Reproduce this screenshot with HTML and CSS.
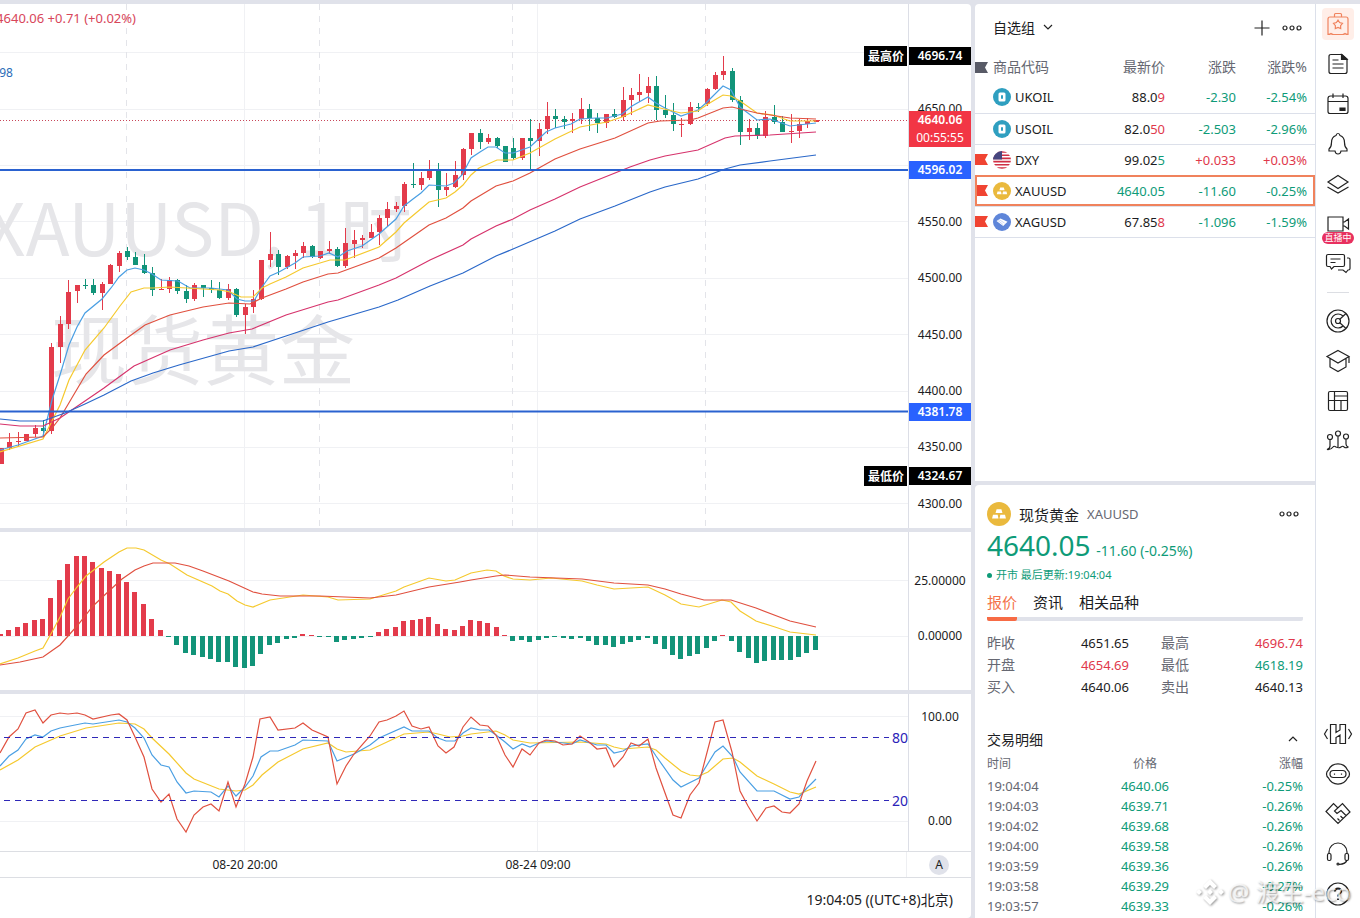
FILE: index.html
```
<!DOCTYPE html>
<html lang="zh-CN">
<head>
    <meta charset="UTF-8">
    <meta name="viewport" content="width=device-width, initial-scale=1.0">
    <title>XAUUSD 现货黄金</title>
    <link rel="stylesheet" href="styles.css">
</head>
<body>
    <div class="app">
        <main class="charts">
            <section class="pane pane-main">
                <svg class="plot" id="pricePlot">
                    <g id="priceGrid"></g>
                    <text class="mark mark-symbol" x="198" y="252">XAUUSD, 1时</text>
                    <text class="mark" x="203" y="375">现货黄金</text>
                    <g id="priceData"></g>
                    <text class="legend red-text" x="136" y="19">4640.06 +0.71 (+0.02%)</text>
                    <text class="legend small blue-text" x="13" y="73">4598</text>
                    <svg class="edge" x="100%">
                        <rect class="tag-black" x="-44" y="42" width="43" height="20" />
                        <text class="tag-text" x="-22" y="57">最高价</text>
                        <rect class="tag-black" x="-44" y="462" width="43" height="20" />
                        <text class="tag-text" x="-22" y="477">最低价</text>
                    </svg>
                </svg>
                <svg class="axis" id="priceAxis"></svg>
            </section>

            <section class="pane pane-sub">
                <svg class="plot" id="macdPlot"></svg>
                <svg class="axis">
                    <text class="tick" x="31" y="53">25.00000</text>
                    <text class="tick" x="31" y="108">0.00000</text>
                </svg>
            </section>

            <section class="pane pane-sub">
                <svg class="plot" id="kdjPlot">
                    <g id="kdjData"></g>
                    <svg class="edge" x="100%">
                        <text class="level" x="-16" y="49">80</text>
                        <text class="level" x="-16" y="112">20</text>
                    </svg>
                </svg>
                <svg class="axis">
                    <text class="tick" x="31" y="27">100.00</text>
                    <text class="tick" x="31" y="131">0.00</text>
                </svg>
            </section>

            <div class="time-axis">
                <svg class="plot">
                    <text class="tick" x="245" y="17">08-20 20:00</text>
                    <text class="tick" x="538" y="17">08-24 09:00</text>
                </svg>
                <div class="time-corner"><button class="auto-btn" type="button">A</button></div>
            </div>
            <footer class="chart-footer">
                <button class="clock" type="button">19:04:05 ((UTC+8)北京)</button>
            </footer>
        </main>

        <aside class="side">
            <section class="watchlist">
                <header class="watch-head">
                    <button class="group-btn" type="button">自选组
                        <svg width="10" height="6" viewBox="0 0 10 6"><path d="M1 1l4 4 4-4" /></svg>
                    </button>
                    <div class="head-tools">
                        <button type="button" aria-label="添加"><svg width="16" height="16" viewBox="0 0 16 16"><path d="M8 .5v15M.5 8h15" /></svg></button>
                        <button type="button" aria-label="更多"><svg width="20" height="6" viewBox="0 0 20 6"><circle cx="3" cy="3" r="2" /><circle cx="10" cy="3" r="2" /><circle cx="17" cy="3" r="2" /></svg></button>
                    </div>
                </header>
                <table class="watch-table">
                    <thead>
                        <tr>
                            <th class="c-flag"><svg class="flag grey" width="13" height="11"><path d="M0 0h13l-3 5.500 3 5.500H0z" /></svg></th>
                            <th class="c-name">商品代码</th>
                            <th class="c-price">最新价</th>
                            <th class="c-diff">涨跌</th>
                            <th class="c-pct">涨跌%</th>
                        </tr>
                    </thead>
                    <tbody>
                        <tr>
                            <td></td>
                            <td><span class="symbol"><svg class="coin" viewBox="0 0 18 18"><use href="#oil" /></svg>UKOIL</span></td>
                            <td>88.0<span class="up">9</span></td>
                            <td class="down">-2.30</td>
                            <td class="down">-2.54%</td>
                        </tr>
                        <tr>
                            <td></td>
                            <td><span class="symbol"><svg class="coin" viewBox="0 0 18 18"><use href="#oil" /></svg>USOIL</span></td>
                            <td>82.0<span class="up">50</span></td>
                            <td class="down">-2.503</td>
                            <td class="down">-2.96%</td>
                        </tr>
                        <tr>
                            <td><svg class="flag" width="13" height="11"><path d="M0 0h13l-3 5.500 3 5.500H0z" /></svg></td>
                            <td><span class="symbol"><svg class="coin" viewBox="0 0 18 18"><use href="#usa" /></svg>DXY</span></td>
                            <td>99.02<span class="down">5</span></td>
                            <td class="up">+0.033</td>
                            <td class="up">+0.03%</td>
                        </tr>
                        <tr class="selected">
                            <td><svg class="flag" width="13" height="11"><path d="M0 0h13l-3 5.500 3 5.500H0z" /></svg></td>
                            <td><span class="symbol"><svg class="coin" viewBox="0 0 18 18"><use href="#gold" /></svg>XAUUSD</span></td>
                            <td class="down">4640.05</td>
                            <td class="down">-11.60</td>
                            <td class="down">-0.25%</td>
                        </tr>
                        <tr>
                            <td><svg class="flag" width="13" height="11"><path d="M0 0h13l-3 5.500 3 5.500H0z" /></svg></td>
                            <td><span class="symbol"><svg class="coin" viewBox="0 0 18 18"><use href="#silver" /></svg>XAGUSD</span></td>
                            <td>67.85<span class="up">8</span></td>
                            <td class="down">-1.096</td>
                            <td class="down">-1.59%</td>
                        </tr>
                    </tbody>
                </table>
            </section>

            <section class="detail">
                <header class="detail-head">
                    <svg class="coin-lg" viewBox="0 0 18 18"><use href="#gold" /></svg>
                    <h2>现货黄金</h2>
                    <span class="code">XAUUSD</span>
                    <button type="button" aria-label="更多"><svg width="20" height="6" viewBox="0 0 20 6"><circle cx="3" cy="3" r="2" /><circle cx="10" cy="3" r="2" /><circle cx="17" cy="3" r="2" /></svg></button>
                </header>
                <p class="quote down"><span class="last">4640.05</span> -11.60 (-0.25%)</p>
                <p class="status down"><i class="dot"></i>开市 最后更新:19:04:04</p>
                <nav class="tabs">
                    <a class="active" href="#">报价</a>
                    <a href="#">资讯</a>
                    <a href="#">相关品种</a>
                </nav>
                <dl class="stats">
                    <dt>昨收</dt><dd>4651.65</dd>
                    <dt>最高</dt><dd class="up">4696.74</dd>
                    <dt>开盘</dt><dd class="up">4654.69</dd>
                    <dt>最低</dt><dd class="down">4618.19</dd>
                    <dt>买入</dt><dd>4640.06</dd>
                    <dt>卖出</dt><dd>4640.13</dd>
                </dl>
                <div class="ticks-head">
                    <h3>交易明细</h3>
                    <button type="button" aria-label="收起"><svg width="10" height="6" viewBox="0 0 10 6"><path d="M1 5l4-4 4 4" /></svg></button>
                </div>
                <table class="ticks">
                    <thead><tr><th>时间</th><th>价格</th><th>涨幅</th></tr></thead>
                    <tbody>
                        <tr><td>19:04:04</td><td>4640.06</td><td>-0.25%</td></tr>
                        <tr><td>19:04:03</td><td>4639.71</td><td>-0.26%</td></tr>
                        <tr><td>19:04:02</td><td>4639.68</td><td>-0.26%</td></tr>
                        <tr><td>19:04:00</td><td>4639.58</td><td>-0.26%</td></tr>
                        <tr><td>19:03:59</td><td>4639.36</td><td>-0.26%</td></tr>
                        <tr><td>19:03:58</td><td>4639.29</td><td>-0.27%</td></tr>
                        <tr><td>19:03:57</td><td>4639.33</td><td>-0.26%</td></tr>
                    </tbody>
                </table>
            </section>
        </aside>

        <nav class="rail">
            <button class="on" type="button" aria-label="自选"><svg viewBox="0 0 32 32"><path d="M12.500 9V6.500q0-1 1-1h5q1 0 1 1V9M8 9h16q2 0 2 2v15.500q-2 0-3-1-1 1-2.500 1H11.500q-1.500 0-2.500-1-1 1-3 1V11q0-2 2-2z" /><path d="M16 12l1.600 2.500 2.900.8-1.900 2.300.1 3-2.700-1.100-2.700 1.100.1-3-1.900-2.300 2.900-.8z" /></svg></button>
            <button type="button" aria-label="资讯"><svg viewBox="0 0 32 32"><path d="M20 6.500H9q-2 0-2 2v15q0 2 2 2h14q2 0 2-2V11zM10.500 12h6M10.500 16h11M10.500 20h11" /><path class="solid" d="M19.500 6.500v5H25z" /></svg></button>
            <button type="button" aria-label="日历"><svg viewBox="0 0 32 32"><path d="M8.500 8h15q2.500 0 2.500 2.500v13q0 2-2 2H8q-2 0-2-2v-13Q6 8 8.500 8zM6 13.500h20M11 5.500V10M21 5.500V10" /><path class="solid" d="M18 20h5v2.500h-5z" /></svg></button>
            <button type="button" aria-label="提醒"><svg viewBox="0 0 32 32"><path d="M14 7.500q.3-2 2-2t2 2q4.500 1.500 4.500 7 0 4.500 2.500 6.500v2h-6q-.5 3-3 3t-3-3H7v-2q2.500-2 2.500-6.500 0-5.500 4.500-7z" /></svg></button>
            <button type="button" aria-label="图层"><svg viewBox="0 0 32 32"><path d="M16 7.500L26 14l-10 6.500L6 14zM5.500 19L16 25l10.500-6" /></svg></button>
            <button type="button" aria-label="直播"><svg viewBox="0 0 32 32"><path d="M6 9h15v14H6zM21 14h1.500l4-3v10l-4-3H21" /></svg><span class="live">直播中</span></button>
            <button type="button" aria-label="聊天"><svg viewBox="0 0 32 32"><path d="M6 6.500h15q1.500 0 1.500 1.500v9q0 1.500-1.500 1.500H12L9.500 21 8 18.500H6q-1.500 0-1.500-1.500V8q0-1.500 1.500-1.500zM8.500 11h10M8.500 14.500h5M25 10h1.500q1.500 0 1.500 1.500v9q0 1.500-1.500 1.500H26l-2 2.500-3-2.500h-5" /></svg></button>
            <hr>
            <button type="button" aria-label="雷达"><svg viewBox="0 0 32 32"><circle cx="16" cy="16" r="11" /><path d="M21 11a7 7 0 1 0 0 10M24 8.500L17.500 14.500M24 23.500l-6.500-6" /><circle cx="16" cy="16" r="2.500" /></svg></button>
            <button type="button" aria-label="学院"><svg viewBox="0 0 32 32"><path d="M16 5.500L27 11.500 16 18 5 11.500zM8 13.500V22l8 4.500 8-4.500v-8.500M27 11.500V18" /></svg></button>
            <button type="button" aria-label="数据"><svg viewBox="0 0 32 32"><path d="M8 6.500h16q1.500 0 1.500 1.500v16q0 1.500-1.500 1.500H8q-1.500 0-1.500-1.500V8q0-1.500 1.500-1.500zM12.500 6.500v19M6.500 15.500h19M12.500 11h13M19 15.500v10" /></svg></button>
            <button type="button" aria-label="指标"><svg viewBox="0 0 32 32"><circle cx="8" cy="12" r="2.500" /><circle cx="16" cy="8.500" r="2.500" /><circle cx="24" cy="11.500" r="2.500" /><path d="M8 14.500v6.500q0 2.500-3 3.500 4 .5 6-2.500 1-1.500 3 0 3 1.500 5 0 2-1.500 3 0 2 1.500 4 0-2-1-2-3v-5M16 11v11" /></svg></button>

            <button class="bottom" type="button" aria-label="工具"><svg viewBox="0 0 32 32"><path d="M8.500 6.500H14v8l4-2.500V6.500h5.500v19H18v-8.500l-4 2.500v6H8.500zM5.500 11l-3 5 3 5M26.500 11l3 5-3 5" /></svg></button>
            <button type="button" aria-label="助手"><svg viewBox="0 0 32 32"><path d="M6.500 12a10.500 10.500 0 0 1 19 0q2 1.500 2 4t-2 4a10.500 10.500 0 0 1-19 0q-2-1.500-2-4t2-4z" /><rect x="8" y="12.500" width="16" height="7" rx="3.500" /><path d="M12.500 15.500v1.200M19.500 15.500v1.200" /></svg></button>
            <button type="button" aria-label="合作"><svg viewBox="0 0 32 32"><path d="M16 10l-4.500-4.500L4 13.500l12 12L28 14l-7.500-8.500L12.500 13l2.500 2.500 4-3 5 5M15.500 20.500l2 2M18.500 18l2.500 2.500" /></svg></button>
            <button type="button" aria-label="客服"><svg viewBox="0 0 32 32"><path d="M7 16v-2a9 9 0 0 1 18 0v2M25 22q-1 4-8 4.500" /><rect x="5.500" y="15.500" width="3.500" height="7" rx="1.500" /><rect x="23" y="15.500" width="3.500" height="7" rx="1.500" /><circle cx="16" cy="26" r="1" /></svg></button>
            <button type="button" aria-label="帮助"><svg viewBox="0 0 32 32"><circle cx="16" cy="16" r="11" /><path class="bold" d="M12.800 13.500q.2-3 3.200-3t3.200 2.700q0 1.800-1.700 2.600-1.500.8-1.500 2.700M16 20.500V22" /></svg></button>
        </nav>
    </div>

    <div class="watermark">
        <svg width="28" height="28" viewBox="0 0 28 28"><path d="M14 1l7 7-3 3-4-4-4 4-3-3zM14 27l7-7-3-3-4 4-4-4-3 3zM14 11l3 3-3 3-3-3zM3 11l3 3-3 3-3-3zM25 11l3 3-3 3-3-3z" /></svg>
        <span>@ 渡生-eco</span>
    </div>

    <svg class="defs">
        <symbol id="oil" viewBox="0 0 18 18"><circle cx="9" cy="9" r="9" fill="#2f9fc0" /><rect x="5.500" y="4.500" width="7" height="9" rx="1.500" fill="#fff" /><rect x="8" y="7" width="2" height="4" rx="1" fill="#2f9fc0" /></symbol>
        <symbol id="gold" viewBox="0 0 18 18"><circle cx="9" cy="9" r="9" fill="#eab93d" /><path d="M7.200 5.500h3.600l.8 2.800H6.400zM4.500 9.500H8l.6 2.800H3.800zM10 9.500h3.500l.7 2.800H9.400z" fill="#fff" /></symbol>
        <symbol id="silver" viewBox="0 0 18 18"><circle cx="9" cy="9" r="9" fill="#5f86d9" /><path d="M3.500 8l4-2.500 7 3.200-4.300 4.300z" fill="#fff" /><path d="M6 6.500l5.500 3.500M5 7.500l5 4" stroke="#b9caf2" stroke-width=".7" /></symbol>
        <symbol id="usa" viewBox="0 0 18 18"><clipPath id="round"><circle cx="9" cy="9" r="9" /></clipPath><g clip-path="url(#round)"><path fill="#fff" d="M0 0h18v18H0z" /><path d="M0 1h18M0 4.200h18M0 7.400h18M0 10.600h18M0 13.800h18M0 17h18" stroke="#d02f44" stroke-width="1.600" /><path fill="#46467f" d="M0 0h9v8.500H0z" /></g></symbol>
    </svg>

    <script src="script.js"></script>
</body>
</html>
```
FILE: styles.css
```
/* Global Styles */
* {
    box-sizing: border-box;
    margin: 0;
    padding: 0;
}

body {
    font-family: "Noto Sans", "Noto Sans CJK SC", sans-serif;
    font-size: 13px;
    color: #1b1c22;
    background-color: #e0e2ea;
    overflow: hidden;
}

button {
    font: inherit;
    color: inherit;
    background: none;
    border: none;
    cursor: pointer;
}

button svg {
    display: block;
    fill: none;
    stroke: #222;
    stroke-width: 1.2;
}

.defs {
    position: absolute;
    width: 0;
    height: 0;
}

.up {
    color: #e0384b;
}

.down {
    color: #0e9b78;
}

.app {
    display: flex;
    height: 100vh;
    padding-top: 4px;
}

/* Charts */
.charts {
    flex: 1;
    min-width: 0;
    display: flex;
    flex-direction: column;
    margin-right: 4px;
}

.pane {
    display: flex;
    flex: none;
    background-color: #fff;
    margin-bottom: 4px;
}

.pane-main {
    height: 524px;
    border-top-right-radius: 4px;
}

.pane-sub {
    height: 158px;
}

.pane-sub + .pane-sub {
    height: 157px;
    margin-bottom: 0;
}

.plot {
    flex: 1;
    min-width: 0;
    height: 100%;
}

.axis {
    flex: none;
    width: 63px;
    height: 100%;
    border-left: 1px solid #dcdee6;
}

.edge {
    overflow: visible;
}

.grid {
    stroke: #f0f1f4;
}

.day {
    stroke: #e3e4e9;
    stroke-dasharray: 6 6;
}

.mark {
    font-family: "Noto Sans CJK SC", sans-serif;
    font-size: 76px;
    fill: #e6e6e9;
    text-anchor: middle;
}

.mark-symbol {
    font-size: 72px;
}

.legend {
    font-size: 13px;
    text-anchor: end;
}

.legend.small {
    font-size: 12px;
}

.red-text {
    fill: #d8465a;
}

.blue-text {
    fill: #2b6cb8;
}

.tick {
    font-size: 12px;
    fill: #1b1c22;
    text-anchor: middle;
}

.tag-black {
    fill: #000;
}

.tag-blue {
    fill: #2962ff;
}

.tag-red {
    fill: #f23645;
}

.tag-text {
    font-size: 12px;
    font-weight: 600;
    fill: #fff;
    text-anchor: middle;
}

.tag-time {
    font-size: 12px;
    fill: #fff;
    text-anchor: middle;
}

.level {
    font-size: 14px;
    fill: #2a22b8;
    text-anchor: start;
}

.red {
    fill: #e33b4b;
}

.green {
    fill: #129479;
}

.line {
    fill: none;
    stroke-width: 1.2;
}

.line-sky {
    stroke: #4a9fe3;
}

.line-yellow {
    stroke: #f5c92e;
}

.line-red {
    stroke: #e0503f;
}

.line-pink {
    stroke: #d6336c;
}

.line-blue {
    stroke: #2a68c9;
}

.hline {
    stroke: #2a62d0;
    stroke-width: 2;
}

.last-line {
    stroke: #c8475a;
    stroke-dasharray: 1 2;
}

.level-line {
    stroke: #2f28b8;
    stroke-width: 1.2;
    stroke-dasharray: 6 5;
}

.time-axis {
    display: flex;
    flex: none;
    height: 26px;
    background-color: #fff;
    border-top: 1px solid #dcdee3;
}

.time-corner {
    width: 65px;
    display: flex;
    align-items: center;
    justify-content: center;
    border-left: 1px solid #eeeff2;
}

.auto-btn {
    width: 20px;
    height: 20px;
    border-radius: 50%;
    background-color: #e0e2ea;
    font-size: 12px;
    line-height: 20px;
}

.chart-footer {
    flex: 1;
    display: flex;
    align-items: center;
    justify-content: flex-end;
    padding: 2px 18px 0;
    background-color: #fff;
    border-top: 1px solid #dcdee3;
    border-bottom-right-radius: 4px;
}

.clock {
    font-size: 14px;
}

/* Side panels */
.side {
    flex: none;
    width: 340px;
    display: flex;
    flex-direction: column;
}

.watchlist {
    flex: none;
    height: 477px;
    background-color: #fff;
    border-radius: 4px 0 0 0;
    margin-bottom: 4px;
}

.watch-head {
    display: flex;
    align-items: center;
    justify-content: space-between;
    height: 48px;
    padding: 0 13px 0 18px;
}

.group-btn {
    display: flex;
    align-items: center;
    gap: 8px;
    padding-bottom: 2px;
    font-size: 14px;
}

.head-tools {
    display: flex;
    align-items: center;
    gap: 12px;
}

.watch-table {
    width: 100%;
    table-layout: fixed;
    border-collapse: collapse;
}

.watch-table th {
    height: 30px;
    padding-bottom: 2px;
    font-size: 14px;
    font-weight: 400;
    text-align: right;
    color: #666872;
}

.watch-table td {
    height: 31px;
    text-align: right;
    border-bottom: 1px solid #dce0ea;
}

.watch-table .c-flag {
    width: 18px;
    padding-bottom: 0;
}

.watch-table .c-name {
    width: 82px;
    text-align: left;
}

.watch-table .c-price {
    width: 90px;
}

.watch-table .c-diff {
    width: 71px;
}

.watch-table .c-pct,
.watch-table td:last-child {
    padding-right: 8px;
}

.watch-table .selected {
    outline: 2px solid #f0825c;
    outline-offset: -2px;
}

.flag {
    display: block;
    fill: #f04432;
}

.flag.grey {
    fill: #585a66;
}

.symbol {
    display: flex;
    align-items: center;
    gap: 4px;
}

.coin {
    width: 18px;
    height: 18px;
}

.coin-lg {
    width: 24px;
    height: 24px;
}

.detail {
    flex: 1;
    min-height: 0;
    overflow: hidden;
    padding: 14px 12px 0;
    background-color: #fff;
    border-radius: 4px 0 0 0;
}

.detail-head {
    display: flex;
    align-items: center;
    gap: 8px;
    height: 30px;
}

.detail-head h2 {
    font-size: 15px;
    font-weight: 400;
}

.detail-head .code {
    color: #666872;
}

.detail-head button {
    margin-left: auto;
    margin-right: 4px;
}

.quote {
    font-size: 14px;
    line-height: 32px;
}

.quote .last {
    margin-right: 2px;
    font-size: 28px;
}

.status {
    display: flex;
    align-items: center;
    gap: 4px;
    font-size: 11px;
    line-height: 16px;
}

.dot {
    width: 5px;
    height: 5px;
    border-radius: 50%;
    background-color: #0e9b78;
}

.tabs {
    display: flex;
    gap: 16px;
    height: 38px;
    border-bottom: 4px solid #e0e2ea;
    border-radius: 2px;
}

.tabs a {
    height: 38px;
    font-size: 15px;
    line-height: 38px;
    color: #1b1c22;
    text-decoration: none;
}

.tabs .active {
    color: #f4724a;
    border-bottom: 4px solid #f76b45;
    border-radius: 2px;
}

.stats {
    display: grid;
    grid-template-columns: 60px 82px 92px 1fr;
    padding-top: 11px;
    line-height: 22px;
}

.stats dt {
    font-size: 14px;
    color: #666872;
}

.stats dt:nth-of-type(even) {
    padding-left: 32px;
}

.stats dd {
    text-align: right;
}

.ticks-head {
    display: flex;
    align-items: center;
    justify-content: space-between;
    height: 24px;
    margin-top: 29px;
    padding-right: 5px;
}

.ticks-head h3 {
    font-size: 14px;
    font-weight: 400;
}

.ticks {
    width: 100%;
    table-layout: fixed;
    border-collapse: collapse;
}

.ticks th {
    height: 25px;
    padding-bottom: 1px;
    font-size: 12px;
    font-weight: 400;
    color: #666872;
}

.ticks td {
    height: 20px;
    line-height: 20px;
    text-align: center;
    color: #0e9b78;
}

.ticks th:first-child,
.ticks td:first-child {
    text-align: left;
    color: #666872;
}

.ticks th:last-child,
.ticks td:last-child {
    text-align: right;
}

/* Icon rail */
.rail {
    flex: none;
    width: 45px;
    display: flex;
    flex-direction: column;
    align-items: center;
    gap: 8px;
    padding: 4px 0 8px;
    background-color: #fff;
    border-left: 1px solid #dce0ea;
}

.rail button {
    position: relative;
    width: 32px;
    height: 32px;
    border-radius: 4px;
}

.rail svg {
    width: 32px;
    height: 32px;
}

.rail .solid {
    fill: #222;
}

.rail .bold {
    stroke-width: 1.8;
}

.rail .on {
    background-color: #ffeee8;
}

.rail .on svg {
    stroke: #f0845f;
}

.rail hr {
    width: 22px;
    margin: 4px 0;
    border: none;
    border-top: 1px solid #dcdee3;
}

.rail .bottom {
    margin-top: auto;
}

.live {
    position: absolute;
    left: 0;
    bottom: -4px;
    width: 32px;
    border-radius: 6px;
    background-color: #e8305f;
    color: #fff;
    font-size: 9px;
    line-height: 12px;
    text-align: center;
}

/* Watermark laid over the corner */
.watermark {
    position: absolute;
    right: 9px;
    bottom: 10px;
    display: flex;
    align-items: center;
    gap: 4px;
    font-size: 24px;
    line-height: 32px;
    color: rgba(255, 255, 255, 0.7);
    text-shadow: 1px 1px 2px rgba(0, 0, 0, 0.4);
    pointer-events: none;
}

.watermark svg {
    fill: #fff;
    filter: drop-shadow(1px 1px 1px rgba(0, 0, 0, 0.4));
}
```
FILE: script.js
```
const NS = "http://www.w3.org/2000/svg";
const STEP = 8.4;
const px = (i) => Math.round(1 + i * STEP);

function add(parent, tag, attrs, text) {
    const el = document.createElementNS(NS, tag);
    Object.keys(attrs).forEach((key) => el.setAttribute(key, attrs[key]));
    if (text) el.textContent = text;
    parent.appendChild(el);
    return el;
}

function hline(parent, y, cls) {
    add(parent, "line", { x1: 0, x2: "100%", y1: y, y2: y, class: cls });
}

function vline(parent, x, cls) {
    add(parent, "line", { x1: x + 0.5, x2: x + 0.5, y1: 0, y2: "100%", class: cls });
}

function curve(parent, points, top, cls) {
    const list = points.trim().split(/\s+/).map((p) => {
        const [x, y] = p.split(",").map(Number);
        return `${x},${y - top}`;
    });
    add(parent, "polyline", { points: list.join(" "), class: `line ${cls}` });
}

// colour, wick top, body top, body bottom, wick bottom
const candles = `
r448,448,464,464 r433,442,448,450 r432,441,442,446 r434,434,441,441 r425,428,434,437 g420,428,431,437
r343,347,431,434 r316,324,347,363 r280,292,324,329 r285,285,291,303 g279,285,286,289 g279,285,293,295
r282,284,293,310 r264,265,284,284 r251,253,266,272 g247,251,257,260 g252,257,265,265 g254,265,273,274
g267,273,290,296 r279,289,290,290 r277,280,289,293 g279,280,291,294 g285,291,299,303 r283,285,299,301
g285,285,288,297 g280,288,290,293 g282,290,298,299 r284,289,298,300 g288,289,315,317 r304,307,315,334
r290,299,307,313 r260,260,299,300 r232,254,260,267 g250,254,267,275 r255,256,267,269 r250,253,256,269
r242,246,253,258 g245,246,257,258 r251,251,258,259 r241,249,251,254 g247,249,266,267 r228,243,266,268
r230,240,244,258 r235,238,240,248 r224,232,238,238 r215,218,232,245 r202,209,218,227 r202,206,209,212
r182,184,206,212 g163,184,185,188 r172,178,185,190 r160,171,178,180 g163,171,190,207 r173,187,190,196
r161,175,187,188 r148,149,175,180 r133,133,149,155 g129,133,142,149 r134,138,142,144 g137,138,146,148
g146,146,162,162 g138,148,158,160 r138,138,158,160 g119,138,141,170 r123,129,141,156 r102,116,129,134
g109,116,119,128 g116,119,122,129 r113,119,121,133 r98,109,119,124 g104,109,118,131 g113,118,123,133
r114,114,123,128 g109,114,117,118 r87,100,117,121 r88,95,100,115 r74,92,95,102 r77,86,93,103
g76,86,110,120 g95,110,115,118 g103,115,124,131 r118,124,125,137 r102,107,124,125 g103,107,108,112
r88,89,104,106 r72,75,89,90 r56,71,75,80 g68,71,100,102 g96,100,132,145 r119,128,132,140
g123,128,136,139 r111,117,136,138 g105,117,122,124 g116,122,132,132 r114,131,132,143 r119,124,131,138
r118,121,124,128 r120,120,122,122`.trim().split(/\s+/);

const macdBars = [2, 6, 9, 13, 16, 17, 38, 56, 72, 80, 80, 74, 68, 65, 62, 54, 44, 32, 17, 6, -1, -9, -17, -19,
    -21, -23, -26, -26, -31, -32, -30, -18, -9, -7, -3, -2, 2, 1, -1, -1, -6, -4, -3, -2, -1, 4, 7, 9, 15, 16,
    17, 19, 12, 7, 6, 10, 16, 15, 13, 9, 1, -5, -4, -6, -4, -2, -1, -2, -3, -2, -5, -9, -9, -11, -8, -6, -4,
    -2, -8, -13, -19, -23, -20, -18, -12, -5, 1, -5, -16, -22, -27, -25, -24, -24, -24, -21, -17, -14];

// Price pane
const priceTop = 4;
const priceGrid = document.getElementById("priceGrid");
[48.5, 105.5, 161.5, 217.5, 274.5, 330.5, 387.5, 443.5, 499.5].forEach((y) => hline(priceGrid, y, "grid"));
[126, 319, 512, 705].forEach((x) => vline(priceGrid, x, "day"));
[244, 537].forEach((x) => vline(priceGrid, x, "grid"));

const priceData = document.getElementById("priceData");
hline(priceData, 116.5, "last-line");
candles.forEach((c, i) => {
    const cls = c[0] === "r" ? "red" : "green";
    const [high, top, bottom, low] = c.slice(1).split(",").map(Number);
    add(priceData, "rect", { x: px(i), y: high - priceTop, width: 1, height: low - high, class: cls });
    add(priceData, "rect", { x: px(i) - 2, y: top - priceTop, width: 5, height: bottom - top, class: cls });
});
curve(priceData, `0,450 18,445 43,436 52,400 60,375 69,345 77,327 85,313 102,299 111,288 119,277 127,270
    135,268 144,270 152,274 161,280 178,281 190,288 211,288 228,290 237,299 245,301 254,301 262,287 270,276
    279,272 295,263 303,257 320,256 329,253 338,257 347,251 362,246 379,234 396,219 404,206 413,199 421,193
    429,185 446,186 454,183 462,175 471,158 480,152 488,147 496,147 505,153 513,153 530,147 546,132 555,128
    571,124 580,119 596,118 607,118 622,114 632,106 648,97 656,103 665,108 681,116 698,110 706,103 723,86
    731,90 740,107 757,120 770,119 790,126 816,123`, priceTop, "line-sky");
curve(priceData, `0,452 43,439 60,405 69,380 85,350 104,328 120,306 131,292 144,288 153,288 170,287 203,289
    220,290 230,292 241,297 253,297 262,288 270,284 286,277 303,268 320,263 330,260 345,260 379,247 396,232
    404,223 429,202 446,198 455,192 463,185 471,175 479,168 497,160 513,160 530,153 555,139 580,127 607,122
    622,117 648,105 660,108 681,113 698,111 708,104 723,95 731,96 740,101 757,113 773,115 790,121
    816,121`, priceTop, "line-yellow");
curve(priceData, `0,438 43,437 52,428 60,418 86,374 104,355 127,338 145,325 170,315 203,307 229,303 250,304
    262,298 286,289 303,282 328,274 338,273 379,258 396,248 429,225 446,218 463,208 471,201 496,186 513,181
    530,173 555,159 580,149 615,138 648,123 660,121 690,120 698,118 723,108 732,107 757,113 790,118
    816,119`, priceTop, "line-red");
curve(priceData, `0,424 20,426 43,426 60,418 85,401 104,388 134,366 170,350 203,340 229,333 252,329 286,315
    328,302 338,300 379,285 396,278 430,260 463,245 471,239 496,226 513,219 530,210 555,199 580,187 615,173
    630,167 650,160 665,156 698,150 725,138 735,136 770,135 816,132`, priceTop, "line-pink");
curve(priceData, `0,419 20,421 43,421 65,413 85,404 104,395 131,381 153,373 179,365 229,351 253,347 286,336
    328,322 379,307 398,300 430,286 463,273 496,256 513,249 555,231 580,219 615,206 650,192 665,187 698,179
    725,169 740,165 770,161 816,155`, priceTop, "line-blue");
hline(priceData, 166, "hline");
hline(priceData, 407.5, "hline");

// Price axis labels
const axis = document.getElementById("priceAxis");
[["4650.00", 105], ["4550.00", 218], ["4500.00", 274], ["4450.00", 331], ["4400.00", 387], ["4350.00", 443], ["4300.00", 500]]
    .forEach(([text, y]) => add(axis, "text", { x: 31, y: y + 4, class: "tick" }, text));
[["4696.74", 43, "tag-black"], ["4640.06", 107, "tag-red"], ["4596.02", 157, "tag-blue"], ["4381.78", 399, "tag-blue"], ["4324.67", 463, "tag-black"]]
    .forEach(([text, y, cls]) => {
        add(axis, "rect", { x: 0, y: y, width: 62, height: 18, class: cls });
        add(axis, "text", { x: 31, y: y + 13, class: "tag-text" }, text);
    });
add(axis, "rect", { x: 0, y: 125, width: 62, height: 18, class: "tag-red" });
add(axis, "text", { x: 31, y: 138, class: "tag-time" }, "00:55:55");

// MACD pane
const macdTop = 532;
const macd = document.getElementById("macdPlot");
[48.5, 104.5].forEach((y) => hline(macd, y, "grid"));
[244, 537].forEach((x) => vline(macd, x, "grid"));
macdBars.forEach((v, i) => {
    const y = v > 0 ? 104 - v : 104;
    add(macd, "rect", { x: px(i) - 3, y: y, width: 5, height: Math.abs(v), class: v > 0 ? "red" : "green" });
});
curve(macd, `0,664 18,658 35,651 43,648 52,632 60,617 68,599 77,587 86,576 104,562 119,552 127,548 136,548
    144,550 161,560 170,564 187,575 212,586 220,591 228,594 237,601 245,605 253,607 270,600 303,595 328,597
    338,600 370,599 396,591 404,587 429,578 446,581 455,580 471,573 487,570 496,571 504,576 513,579 530,580
    551,578 582,581 597,585 614,589 648,587 665,595 681,604 699,607 722,600 731,602 740,611 756,621 775,627
    790,632 816,635`, macdTop, "line-yellow");
curve(macd, `0,665 20,662 43,657 60,645 77,626 93,606 110,590 122,579 135,570 144,566 153,563 175,563 189,566
    203,571 229,581 253,592 262,594 280,596 320,596 370,598 396,595 429,587 460,582 471,580 496,576 505,575
    530,577 582,579 614,583 648,585 665,589 681,594 704,600 731,600 756,608 790,621 816,627`, macdTop, "line-red");

// KDJ pane
const kdjTop = 694;
const kdj = document.getElementById("kdjData");
[22.5, 127.5].forEach((y) => hline(kdj, y, "grid"));
[244, 537].forEach((x) => vline(kdj, x, "grid"));
curve(kdj, `0,770 18,760 35,747 60,736 86,728 119,723 135,724 144,729 152,738 169,754 186,773 194,779 219,789
    236,791 245,790 253,785 262,775 278,762 303,749 328,743 337,749 346,752 370,750 387,742 404,734 429,732
    438,734 450,737 463,736 471,734 496,731 505,735 513,740 530,743 580,742 606,744 614,747 623,749 648,747
    656,750 665,758 681,771 690,775 699,776 708,772 723,759 733,758 740,762 757,776 774,784 790,792 799,794
    816,787`, kdjTop, "line-yellow");
curve(kdj, `0,766 9,756 18,750 26,739 35,735 43,737 51,731 60,728 85,723 93,724 119,720 127,722 135,728 144,738
    152,755 161,765 169,767 177,782 186,793 194,791 211,792 219,797 228,786 236,796 245,787 253,776 261,757
    270,751 278,751 295,745 303,740 328,741 337,761 354,754 370,745 379,738 404,727 412,731 429,731 438,738
    446,741 455,741 463,733 471,728 480,730 489,730 496,735 505,742 513,749 522,744 530,747 539,743 547,741
    572,744 580,740 597,745 606,745 614,753 623,751 631,746 648,744 656,756 673,780 681,787 699,778 715,752
    723,746 733,757 740,772 757,791 774,791 790,799 799,797 807,788 816,779`, kdjTop, "line-sky");
curve(kdj, `0,753 9,737 18,729 26,713 35,710 43,723 51,715 60,713 68,714 77,713 85,715 93,719 111,715 119,714
    127,720 135,737 144,757 152,789 161,802 169,794 177,819 186,832 194,815 203,807 211,804 219,811 228,782
    236,807 245,784 253,757 260,719 270,717 278,730 295,728 303,723 312,730 328,737 337,784 346,766 354,754
    370,736 379,722 387,720 396,716 404,711 412,726 421,729 429,727 438,746 446,753 454,747 463,727 471,717
    480,725 488,726 496,735 505,755 513,767 522,749 530,755 539,743 546,740 555,741 563,745 572,744 580,736
    589,742 597,749 606,748 614,767 623,757 631,743 639,746 648,739 656,768 673,815 681,818 690,795 699,783
    715,722 723,720 732,752 740,791 748,806 757,821 766,808 774,806 782,812 790,813 799,804 807,781
    816,761`, kdjTop, "line-red");
add(kdj, "line", { x1: 4, x2: 889, y1: 43.5, y2: 43.5, class: "level-line" });
add(kdj, "line", { x1: 4, x2: 889, y1: 106.5, y2: 106.5, class: "level-line" });
```
